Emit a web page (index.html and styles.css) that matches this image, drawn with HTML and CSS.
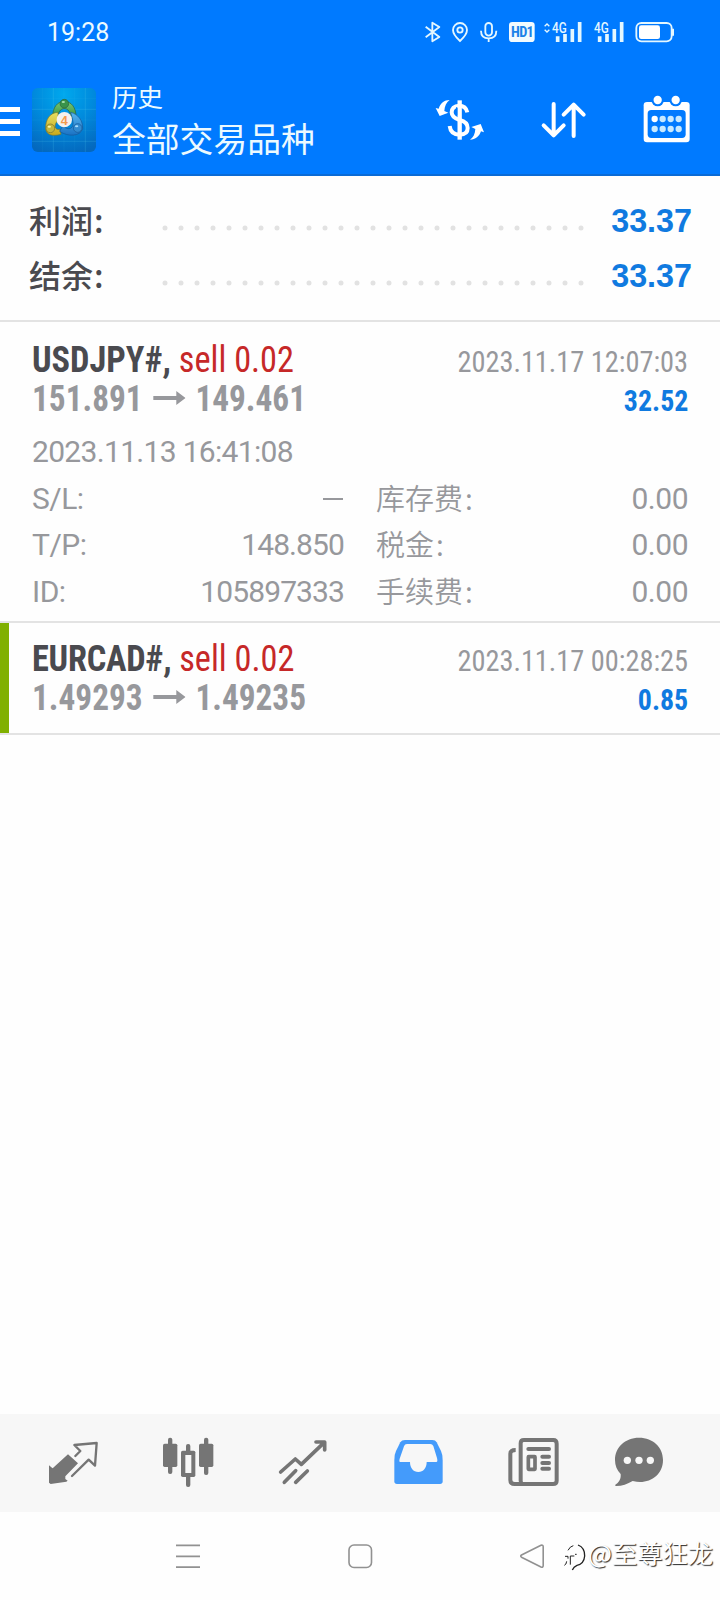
FILE: index.html
```html
<!DOCTYPE html>
<html lang="zh-CN">
<head>
<meta charset="utf-8">
<title>历史</title>
<link rel="stylesheet" href="styles.css">
</head>
<body>
<div class="screen">
  <header class="header">
    <div class="status">
      <span class="clock">19:28</span>
      <svg class="status-icons" viewBox="180 54 780 84" fill="none" stroke="#e4f7ff" stroke-width="5.5">
        <path d="M197 80 L238 111 L217 124 V68 L238 81 L197 112" stroke-linejoin="round"/>
        <path d="M300 123 C288 112 279 103 279 90 A21 21 0 0 1 321 90 C321 103 312 112 300 123 Z"/>
        <circle cx="300" cy="90" r="8"/>
        <rect x="376" y="69" width="20" height="38" rx="10"/>
        <path d="M363 92 C363 107 372 115 386 115 S409 107 409 92 M386 115 V126"/>
        <rect x="447" y="66" width="77" height="60" rx="10" fill="#f2fbff" stroke="none"/>
        <text x="453" y="112" class="hd">HD1</text>
        <path d="M554 79 L561 72 L568 79 M554 89 L561 96 L568 89" stroke-width="4"/>
        <text x="576" y="98" class="net" textLength="44" lengthAdjust="spacingAndGlyphs">4G</text>
        <path d="M593 109 V126 M615 102 V126 M637 87 V126 M659 66 V126" stroke-width="11"/>
        <text x="702" y="98" class="net" textLength="44" lengthAdjust="spacingAndGlyphs">4G</text>
        <path d="M719 109 V126 M741 102 V126 M763 87 V126 M785 66 V126" stroke-width="11"/>
        <rect x="829" y="69" width="106" height="55" rx="15"/>
        <rect x="837" y="76" width="63" height="41" rx="7" fill="#fff" stroke="none"/>
        <path d="M939 86 V107" stroke-width="6"/>
      </svg>
    </div>
    <div class="toolbar">
      <svg class="menu" viewBox="0 0 20 30" fill="#fff"><path d="M0 1h20v5H0zM0 13h20v5H0zM0 25h20v5H0z"/></svg>
      <svg class="logo" viewBox="96 264 192 192">
        <defs>
          <radialGradient id="sky" cx=".5" cy=".1" r=".95"><stop offset="0" stop-color="#00a9ee"/><stop offset=".5" stop-color="#0089dc"/><stop offset="1" stop-color="#0468bd"/></radialGradient>
          <linearGradient id="gr" x2="0" y2="1"><stop offset="0" stop-color="#7cc878"/><stop offset="1" stop-color="#2d8c35"/></linearGradient>
          <linearGradient id="ye" x2="0" y2="1"><stop offset="0" stop-color="#e6df62"/><stop offset="1" stop-color="#c9a91c"/></linearGradient>
          <linearGradient id="bl" x2="0" y2="1"><stop offset="0" stop-color="#57b6ee"/><stop offset="1" stop-color="#1a72c4"/></linearGradient>
        </defs>
        <rect x="96" y="264" width="192" height="192" rx="17" fill="url(#sky)"/>
        <path d="M160 264V456M256 264V456M96 328H288M96 424H288" stroke="#5bd0f2" stroke-opacity=".3" stroke-width="2"/>
        <path d="M128 264V456M192 264V456M224 264V456M96 296H288M96 360H288M96 392H288" stroke="#5bd0f2" stroke-opacity=".1" stroke-width="2"/>
        <g stroke="#28613e" stroke-width="2">
          <path d="M158 352 C157 322 173 304 193 304 S229 322 228 352 L213 356 C212 335 204 326 193 326 S174 335 173 356 Z" fill="url(#gr)"/>
          <path d="M174 337 C150 338 136 358 137 386 C139 405 158 410 183 403 L180 388 C163 391 160 374 174 362 Z" fill="url(#ye)" stroke="#75752d"/>
          <path d="M212 337 C234 342 249 362 248 386 C241 410 203 411 179 394 L188 378 C205 393 225 387 218 360 Z" fill="url(#bl)" stroke="#155898"/>
          <circle cx="193" cy="311" r="13" fill="#39934a"/>
          <circle cx="151" cy="385" r="13" fill="#c5b83e" stroke="#77702d"/>
          <circle cx="233" cy="384" r="13" fill="#328bd0" stroke="#155898"/>
        </g>
        <ellipse cx="190" cy="306" rx="5" ry="3" fill="#a8e0ae"/><ellipse cx="148" cy="380" rx="5" ry="3" fill="#fff7a5"/><ellipse cx="230" cy="379" rx="5" ry="3" fill="#a8ddff"/>
        <circle cx="193" cy="359" r="23" fill="#f4f1ee"/>
        <text x="193" y="374" class="four">4</text>
      </svg>
      <div class="titles">
        <div class="sub">历史</div>
        <div class="main">全部交易品种</div>
      </div>
      <svg class="tools" viewBox="220 279 780 156" fill="none" stroke="#fff">
        <path d="M300 301V419" stroke-width="13"/>
        <path d="M323 337 C320 323 310 317 298 317 C283 317 276 327 276 337 C276 350 286 356 300 360 C316 364 324 371 324 384 C324 398 314 404 300 404 C283 404 272 395 270 378" stroke-width="12"/>
        <path d="M291 322V346M309 371V396" stroke="#007aff" stroke-width="4"/>
        <path d="M270 300 C254 300 242 310 237 326 L228 324 L240 348 L266 338 L254 333 C255 318 260 307 270 300Z" fill="#fff" stroke="none"/>
        <path d="M331 419 C348 419 359 409 364 394 L373 397 L363 372 L335 381 L347 387 C346 402 341 413 331 419Z" fill="#fff" stroke="none"/>
        <path d="M582 312V405M552 376L582 406L612 376M642 408V314M612 344L642 314L672 344" stroke-width="12" stroke-linecap="round" stroke-linejoin="round"/>
        <path d="M862 306H980Q990 306 990 316V417Q990 427 980 427H862Q852 427 852 417V316Q852 306 862 306Z" fill="#fff" stroke="none"/>
        <rect x="864" y="330" width="114" height="84" rx="11" fill="#007aff" stroke="none"/>
        <g fill="#007aff" stroke="none"><circle cx="894" cy="300" r="19"/><circle cx="948" cy="300" r="19"/></g>
        <g fill="#fff" stroke="none"><circle cx="894" cy="300" r="12.5"/><circle cx="948" cy="300" r="12.5"/></g>
        <g fill="#c7e9ff" stroke="none"><circle cx="885" cy="357" r="9.5" fill="#fff"/><circle cx="909" cy="357" r="9.5"/><circle cx="933" cy="357" r="9.5"/><circle cx="957" cy="357" r="9.5"/><circle cx="885" cy="387" r="9.5"/><circle cx="909" cy="387" r="9.5"/><circle cx="933" cy="387" r="9.5"/><circle cx="957" cy="387" r="9.5"/></g>
      </svg>
    </div>
  </header>

  <section class="summary">
    <div class="sum-row"><span class="sum-label">利润<i>:</i></span><svg class="dots" viewBox="0 0 422 6"><path d="M3 3H420"/></svg><span class="sum-value">33.37</span></div>
    <div class="sum-row"><span class="sum-label">结余<i>:</i></span><svg class="dots" viewBox="0 0 422 6"><path d="M3 3H420"/></svg><span class="sum-value">33.37</span></div>
  </section>

  <main class="deals">
    <article class="deal open">
      <div class="line"><span class="cond symbol"><b>USDJPY#,</b> <span class="sell">sell 0.02</span></span><span class="cond time">2023.11.17 12:07:03</span></div>
      <div class="line"><span class="cond price">151.891<svg class="arrow" viewBox="0 0 35 16"><path d="M0 6h25V1l10 7-10 7v-5H0z"/></svg>149.461</span><span class="cond profit">32.52</span></div>
      <div class="opened">2023.11.13 16:41:08</div>
      <div class="details">
        <span>S/L:</span><span class="num"><svg class="dash" viewBox="0 0 20 2"><path d="M0 0h20v2H0z"/></svg></span><span class="zh">库存费<i>:</i></span><span class="num">0.00</span>
        <span>T/P:</span><span class="num tight">148.850</span><span class="zh">税金<i>:</i></span><span class="num">0.00</span>
        <span>ID:</span><span class="num tight">105897333</span><span class="zh">手续费<i>:</i></span><span class="num">0.00</span>
      </div>
    </article>
    <article class="deal marked">
      <div class="line"><span class="cond symbol"><b>EURCAD#,</b> <span class="sell">sell 0.02</span></span><span class="cond time">2023.11.17 00:28:25</span></div>
      <div class="line"><span class="cond price">1.49293<svg class="arrow" viewBox="0 0 35 16"><path d="M0 6h25V1l10 7-10 7v-5H0z"/></svg>1.49235</span><span class="cond profit">0.85</span></div>
    </article>
  </main>

  <nav class="tabs">
    <svg viewBox="136 105 168 168"><path d="M148 196L155 202L159 205L205 163L235 190L197 229L197 237L204 242L200 245L153 252L148 248Z" fill="#757575"/><path d="M227 168L242 153L224 135L291 129L286 197L267 179L217 228" fill="none" stroke="#757575" stroke-width="7" stroke-linecap="round" stroke-linejoin="round"/></svg>
    <svg viewBox="481 105 168 168" fill="#757575"><rect x="490" y="131" width="43" height="70" rx="5"/><rect x="598" y="131" width="43" height="70" rx="5"/><rect x="505" y="113" width="13" height="109" rx="6"/><rect x="613" y="113" width="13" height="112" rx="6"/><rect x="559" y="132" width="13" height="129" rx="6"/><rect x="544" y="152" width="43" height="79" rx="5"/><rect x="557" y="165" width="18" height="54" fill="#f7f7f7"/></svg>
    <svg viewBox="826 105 168 168" fill="none" stroke="#757575" stroke-width="11" stroke-linecap="round" stroke-linejoin="round"><path d="M843 216L887 177L905 193L974 127M949 126H975V150M854 247L888 212M888 247L923 213"/></svg>
    <svg viewBox="90 105 168 168"><path d="M135 120H217Q226 120 230 127L243 153Q248 163 248 180V244Q248 252 240 252H111Q103 252 103 244V180Q103 163 108 153L121 127Q125 120 135 120Z" fill="#449bfb"/><path d="M141 132H211Q217 132 220 138L231 174Q234 186 229 186H200C200 204 190 216 175 216S150 204 150 186H122Q116 186 119 176L132 139Q134 132 141 132Z" fill="#f7f7f7"/></svg>
    <svg viewBox="435 105 168 168" fill="none" stroke="#757575" stroke-width="12"><path d="M467 150Q451 150 451 161V240Q451 252 464 252H579Q590 252 590 242V131Q590 120 580 120H492Q482 120 482 130V242Q482 249 487 252"/><path d="M505 147H567M547 170H567M547 189H567M547 206H567" stroke-linecap="round"/><rect x="505" y="170" width="20" height="38" rx="1" stroke-width="11"/></svg>
    <svg viewBox="753 105 168 168"><path d="M837 113C880 113 909 142 909 180C909 220 878 246 840 246Q831 246 818 243C802 252 787 258 768 258Q763 257 768 253C780 244 783 234 782 222C771 211 765 197 765 180C765 142 795 113 837 113Z" fill="#757575"/><g fill="#f7f7f7"><circle cx="802" cy="181" r="11"/><circle cx="837" cy="181" r="11"/><circle cx="871" cy="181" r="11"/></g></svg>
  </nav>

  <footer class="sysnav">
    <svg viewBox="0 0 26 26" fill="none" stroke="#919191" stroke-width="1.8"><path d="M1 2.3H25M1 13.3H25M1 24.2H25"/></svg>
    <svg viewBox="0 0 26 26" fill="none" stroke="#919191" stroke-width="1.6"><rect x="2" y="2" width="22.5" height="22.5" rx="5"/></svg>
    <svg viewBox="0 0 26 26" fill="none" stroke="#919191" stroke-width="1.6" stroke-linejoin="round"><path d="M22 2.3L2.5 12Q1 13 2.5 14.2L22 24Q24.2 24.8 24.2 22.5V3.8Q24.2 1.7 22 2.3Z"/></svg>
    <div class="watermark">
      <svg viewBox="606 430 72 90" fill="none" stroke="#222" stroke-width="3"><path d="M612 473H621V480M610 500Q616 498 617 488M621 455Q627 443 637 441M628 498V472H640M642 467H647"/><path d="M651 439Q672 447 671 472Q669 496 648 500Q638 504 634 514" stroke-width="4"/></svg>
      <span>@至尊狂龙</span>
    </div>
  </footer>
</div>
</body>
</html>
```
FILE: styles.css
```css
* { box-sizing: border-box; }
body { margin: 0; background: #fff; }
i { font-style: normal; }
.screen {
  width: 720px;
  height: 1600px;
  display: flex;
  flex-direction: column;
  background: #fefefe;
  font-family: Roboto, "Noto Sans CJK SC", sans-serif;
  white-space: nowrap;
  overflow: hidden;
}
svg { display: block; flex: none; }

.header {
  height: 176px;
  background: #007aff;
  border-bottom: 2px solid #0a6bd6;
  color: #ecfaff;
}
.status {
  height: 64px;
  padding: 18px 40px 0 47px;
  display: flex;
  justify-content: space-between;
}
.clock { font-size: 25px; line-height: 30px; }
.status-icons { width: 260px; height: 28px; }
.hd { font: 700 43px "Roboto Condensed", Roboto, sans-serif; font-stretch: 75%; letter-spacing: -2px; fill: #1c83e8; stroke: none; }
.net { font: 500 42px Roboto, sans-serif; fill: #e4f7ff; stroke: none; }

.toolbar { height: 110px; display: flex; align-items: flex-start; }
.menu { width: 20px; height: 30px; margin-top: 42px; }
.logo { width: 64px; height: 64px; margin: 24px 0 0 12px; }
.four { font: 700 38px "Liberation Sans", sans-serif; fill: #f49a4c; text-anchor: middle; }
.titles {
  margin: 13px 0 0 16px;
  width: 240px;
  font-family: "Noto Sans CJK SC", sans-serif;
}
.sub { font-size: 25.5px; line-height: 38px; }
.main { margin-top: 1px; font-size: 33.8px; line-height: 44px; }
.tools { width: 260px; height: 52px; margin: 29px 0 0 81px; }

.summary {
  height: 146px;
  padding: 18px 28px 0 29px;
  border-bottom: 2px solid #e3e3e3;
}
.sum-row { height: 55px; display: flex; align-items: center; }
.sum-label {
  width: 133px;
  padding-bottom: 5px;
  font: 500 32px/50px "Noto Sans CJK SC", sans-serif;
  color: #4a4a4f;
}
.sum-label i { margin-left: 1px; }
.dots { width: 422px; height: 6px; margin-top: 13px; }
.dots path { stroke: #e2e2e2; stroke-width: 5; stroke-linecap: round; stroke-dasharray: 0 16; fill: none; }
.sum-value {
  margin-left: auto;
  font: 700 32.3px/55px "Liberation Sans", sans-serif;
  color: #107ae0;
}

.deal {
  padding: 17px 32px 15px 33px;
  border-bottom: 2px solid #e3e3e3;
  color: #97989c;
}
.deal.open { padding: 19px 32px 6px 33px; height: 301px; }
.deal.marked { position: relative; height: 112px; }
.deal.marked::before {
  content: "";
  position: absolute;
  left: 0; top: 0; bottom: 0;
  width: 9px;
  background: #80b000;
}
.line {
  height: 39px;
  display: flex;
  justify-content: space-between;
  align-items: baseline;
  line-height: 39px;
}
.cond { font-family: "Roboto Condensed", Roboto, sans-serif; font-stretch: 75%; }
.symbol { margin-left: -1px; font-size: 36px; transform: scaleX(0.953); transform-origin: left; }
.symbol b { color: #4a4a4f; font-weight: 700; }
.marked .symbol b { letter-spacing: -0.27px; }
.sell { color: #c62828; }
.time { font-size: 30px; transform: scaleX(0.945); transform-origin: right; }
.price { margin-left: -1px; font-size: 36px; font-weight: 700; transform: scaleX(0.925); transform-origin: left; }
.profit { font-size: 30px; font-weight: 700; color: #107ae0; transform: scaleX(0.93); transform-origin: right; }
.arrow { display: inline-block; width: 35px; height: 16px; margin: 0 11px 0 11px; vertical-align: 5px; fill: #97989c; }
.opened { margin: 9px 0 0 -1px; font-size: 30px; font-weight: 400; line-height: 47px; letter-spacing: -0.68px; }
.details {
  margin-left: -1px;
  padding-top: 0.5px;
  display: grid;
  grid-template-columns: 100px 212px 132px 1fr;
  grid-auto-rows: 46.5px;
  font-size: 30px;
  font-weight: 400;
  line-height: 46.5px;
  letter-spacing: -0.5px;
}
.details .num { text-align: right; }
.details .tight { letter-spacing: -0.9px; }
.details .zh { padding-left: 32px; font: 350 29px/43.5px "Noto Sans CJK SC", sans-serif; letter-spacing: 0; }
.details .zh i { margin-left: 2px; }
.dash { display: inline-block; width: 20px; height: 2px; margin-right: 1px; vertical-align: 9px; fill: #97989c; }

.tabs {
  margin-top: auto;
  height: 98px;
  padding-left: 15px;
  display: grid;
  grid-template-columns: repeat(5, 115px) 97px;
  align-items: center;
  justify-items: center;
  background: #f7f7f7;
}
.tabs svg { width: 56px; height: 56px; }
.sysnav {
  position: relative;
  height: 88px;
  padding-left: 175px;
  display: flex;
  align-items: center;
  gap: 146px;
}
.sysnav > svg { width: 26px; height: 26px; }
.watermark {
  position: absolute;
  left: 563px;
  top: 20px;
  display: flex;
  align-items: center;
}
.watermark svg { width: 24px; height: 30px; margin-top: 10px; }
.watermark span {
  margin-left: 1px;
  font: 400 25.3px/38px "Noto Sans CJK SC", sans-serif;
  color: #fff;
  text-shadow: 1px 1px 1px rgba(0, 0, 0, 0.85);
}
```
